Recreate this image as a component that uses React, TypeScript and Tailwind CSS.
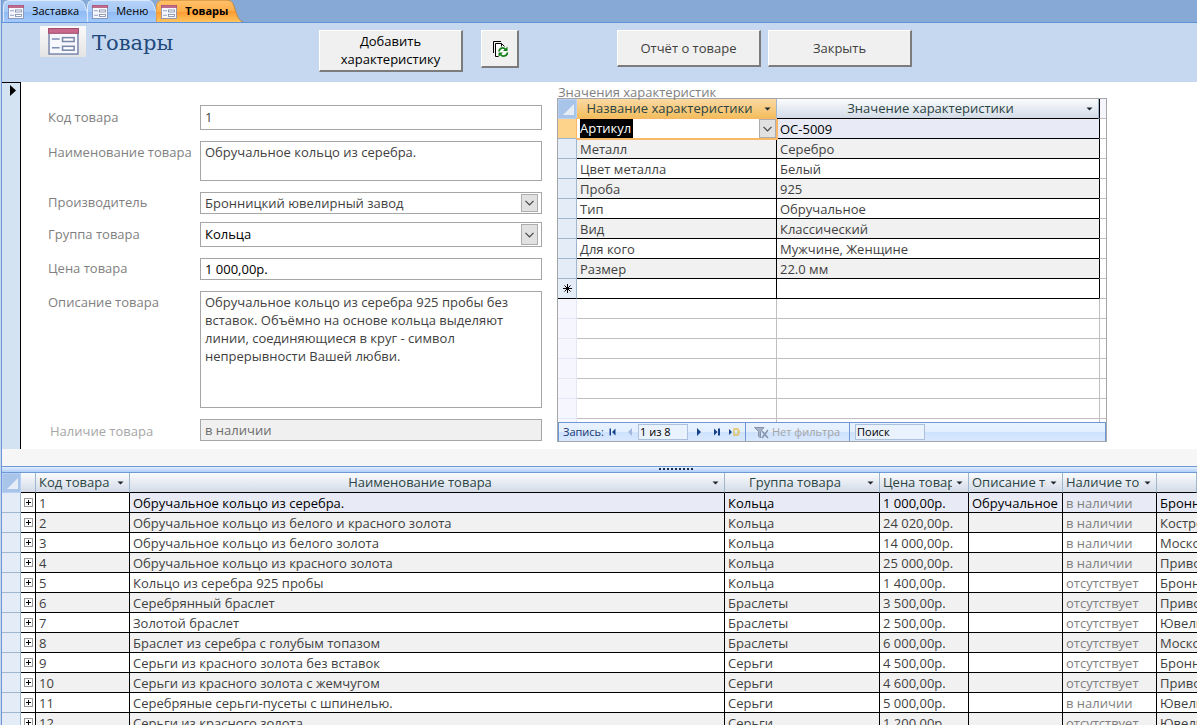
import React, { useState } from 'react';

const UI_FONT = "font-['Open_Sans','Noto_Sans',sans-serif]";

type Product = {
  id: number;
  name: string;
  group: string;
  price: string;
  description?: string;
  stock: string;
  maker: string;
};

const products: Product[] = [
  { id: 1, name: 'Обручальное кольцо из серебра.', group: 'Кольца', price: '1 000,00р.', description: 'Обручальное', stock: 'в наличии', maker: 'Бронницкий' },
  { id: 2, name: 'Обручальное кольцо из белого и красного золота', group: 'Кольца', price: '24 020,00р.', stock: 'в наличии', maker: 'Костромской' },
  { id: 3, name: 'Обручальное кольцо из белого золота', group: 'Кольца', price: '14 000,00р.', stock: 'в наличии', maker: 'Московский' },
  { id: 4, name: 'Обручальное кольцо из красного золота', group: 'Кольца', price: '25 000,00р.', stock: 'в наличии', maker: 'Приволжский' },
  { id: 5, name: 'Кольцо из серебра 925 пробы', group: 'Кольца', price: '1 400,00р.', stock: 'отсутствует', maker: 'Бронницкий' },
  { id: 6, name: 'Серебрянный браслет', group: 'Браслеты', price: '3 500,00р.', stock: 'отсутствует', maker: 'Приволжский' },
  { id: 7, name: 'Золотой браслет', group: 'Браслеты', price: '2 500,00р.', stock: 'отсутствует', maker: 'Ювелирный' },
  { id: 8, name: 'Браслет из серебра с голубым топазом', group: 'Браслеты', price: '6 000,00р.', stock: 'отсутствует', maker: 'Московский' },
  { id: 9, name: 'Серьги из красного золота без вставок', group: 'Серьги', price: '4 500,00р.', stock: 'отсутствует', maker: 'Бронницкий' },
  { id: 10, name: 'Серьги из красного золота с жемчугом', group: 'Серьги', price: '4 600,00р.', stock: 'отсутствует', maker: 'Приволжский' },
  { id: 11, name: 'Серебряные серьги-пусеты с шпинелью.', group: 'Серьги', price: '5 000,00р.', stock: 'в наличии', maker: 'Ювелирный' },
  { id: 12, name: 'Серьги из красного золота', group: 'Серьги', price: '1 200,00р.', stock: 'отсутствует', maker: 'Ювелирный' },
];

const features = [
  ['Артикул', 'ОС-5009'],
  ['Металл', 'Серебро'],
  ['Цвет металла', 'Белый'],
  ['Проба', '925'],
  ['Тип', 'Обручальное'],
  ['Вид', 'Классический'],
  ['Для кого', 'Мужчине, Женщине'],
  ['Размер', '22.0 мм'],
];

function FormIcon({ className }: { className: string }) {
  return (
    <svg viewBox="0 0 32 28" className={className} aria-hidden="true">
      <rect x="1" y="1" width="30" height="26" fill="#f6f8fd" stroke="#7583aa" strokeWidth="1.5" />
      <rect x="0.5" y="0.5" width="31" height="5" fill="#c8688a" stroke="#a04c6e" />
      <path d="M4 11.5h8M4 20.5h8" stroke="#7d8cb8" strokeWidth="1.6" />
      <rect x="15" y="10" width="12" height="4" fill="#fff" stroke="#7a87a8" strokeWidth="1.6" />
      <rect x="15" y="19" width="12" height="4" fill="#fff" stroke="#7a87a8" strokeWidth="1.6" />
    </svg>
  );
}

function Tab({ title, active, first }: { title: string; active?: boolean; first?: boolean }) {
  const id = active ? 'tab-hot' : 'tab-cold';
  return (
    <button type="button" className={`flex h-[22px] ${first ? 'ml-px' : '-ml-[7px]'}`}>
      <span
        className={`flex h-full items-center gap-2 rounded-tl-md border-t border-l pl-1 text-[11px] text-black ${
          active
            ? 'border-[#e3a04a] bg-[linear-gradient(#ffc069_0%,#ffae49_50%,#ff9a30_52%,#ffc45e_100%)] font-bold'
            : 'border-[#dbe9fb] bg-[linear-gradient(#b5d2f8_0%,#a5c9f7_50%,#8fbaf3_52%,#a3c9fa_100%)]'
        }`}
      >
        <FormIcon className="h-[14px] w-4" />
        {title}
      </span>
      <svg viewBox="0 0 15 22" className="h-[22px] w-[15px]" aria-hidden="true">
        <defs>
          <linearGradient id={id} x1="0" y1="0" x2="0" y2="1">
            <stop offset="0" stopColor={active ? '#ffc069' : '#b5d2f8'} />
            <stop offset="0.5" stopColor={active ? '#ffae49' : '#a5c9f7'} />
            <stop offset="0.52" stopColor={active ? '#ff9a30' : '#8fbaf3'} />
            <stop offset="1" stopColor={active ? '#ffc45e' : '#a3c9fa'} />
          </linearGradient>
        </defs>
        <path d="M0 0C4 0 5 3 7 9S11 22 15 22H0Z" fill={`url(#${id})`} />
        <path d="M0 0.5C4 0.5 5 3 7 9S11 21.5 15 21.5" fill="none" stroke={active ? '#b98a4c' : '#dbe9fb'} />
      </svg>
    </button>
  );
}

function BevelButton({ className, children, label }: { className: string; children: React.ReactNode; label?: string }) {
  return (
    <button
      type="button"
      aria-label={label}
      className={`flex shrink-0 items-center justify-center border-t border-l border-r-2 border-b-2 border-t-white border-l-white border-r-[#7c7c7c] border-b-[#7c7c7c] bg-[#f0f0f0] text-[13px] leading-[18px] ${className}`}
    >
      {children}
    </button>
  );
}

function Chevron() {
  return (
    <span className="pointer-events-none flex w-[17px] items-center justify-center border border-[#adadad] bg-[#e1e1e1]">
      <svg viewBox="0 0 9 6" className="h-[6px] w-[9px]" aria-hidden="true">
        <path d="M0.5 0.8L4.5 4.8L8.5 0.8" fill="none" stroke="#444" strokeWidth="1.2" />
      </svg>
    </span>
  );
}

function FormRow({ id, label, top, muted, children }: { id: string; label: string; top?: boolean; muted?: boolean; children: React.ReactNode }) {
  return (
    <div className={`flex ${top ? 'items-start' : 'items-center'}`}>
      <label
        htmlFor={id}
        className={`w-[152px] shrink-0 leading-[18px] whitespace-nowrap ${top ? 'pt-[2px]' : ''} ${muted ? 'pt-[2px] pl-[2px] text-[#a6a6a6]' : 'pb-[2px] text-[#7f7f7f]'}`}
      >
        {label}
      </label>
      {children}
    </div>
  );
}

function Combo({ id, value, className }: { id: string; value: string; className: string }) {
  return (
    <div className={`flex flex-1 border border-[#a6a6a6] bg-white py-px pr-[3px] ${className}`}>
      <select id={id} defaultValue={value} className="min-w-0 flex-1 appearance-none bg-transparent px-1 outline-none">
        <option>{value}</option>
      </select>
      <Chevron />
    </div>
  );
}

// Column header with its small sort/filter arrow
function Head({ title, hot, tight }: { title: string; hot?: boolean; tight?: boolean }) {
  return (
    <th
      scope="col"
      className={`h-5 overflow-hidden border-r border-b border-r-[#9eb6ce] border-b-black p-0 align-top font-normal text-[#2c4444] ${
        hot ? 'bg-linear-to-b from-[#fad9a2] to-[#f3bd5c]' : 'bg-linear-to-b from-[#fafcfd] to-[#d3dbe7]'
      }`}
    >
      <div className="flex items-center pr-[5px]">
        <span className={`min-w-0 flex-1 overflow-hidden leading-[19px] whitespace-nowrap ${tight ? 'pl-[3px] text-left' : 'pl-[2px] text-center'}`}>{title}</span>
        {title && (
          <svg viewBox="0 0 7 4" className="mt-px ml-1 h-1 w-[7px] shrink-0" aria-hidden="true">
            <path d="M0.5 0.5H6.5L3.5 3.5Z" fill="#1c2430" />
          </svg>
        )}
      </div>
    </th>
  );
}

function CornerHead() {
  return (
    <th scope="col" aria-label="Выделить все" className="h-5 border border-[#b8d0f5] bg-[#a9c4e9] p-0">
      <svg viewBox="0 0 17 18" className="block h-[18px] w-[17px]" aria-hidden="true">
        <path d="M15 4V15H4Z" fill="#e6edf6" />
      </svg>
    </th>
  );
}

function NavBar() {
  const [query, setQuery] = useState('Поиск');
  return (
    <div className="flex h-[19px] items-center border border-b-0 border-[#6f97d3] bg-[linear-gradient(#e9f2ff_0%,#e3efff_50%,#cfe2fd_52%,#d8e8ff_100%)] text-[11px] whitespace-nowrap text-[#15366f]">
      <div className="flex h-full w-[187px] shrink-0 items-center border-r border-[#6f97d3] pl-1">
        <span className="w-[46px]">Запись:</span>
        <button type="button" aria-label="Первая запись">
          <svg viewBox="0 0 8 8" className="h-2 w-2"><path d="M0.5 0.5h1.5v7H0.5zM6.5 0.5v7L3 4z" fill="#15428b" /></svg>
        </button>
        <button type="button" aria-label="Предыдущая запись" className="ml-[10px]">
          <svg viewBox="0 0 5 8" className="h-2 w-[5px]"><path d="M5 0v8L1 4z" fill="#a3b9dc" /></svg>
        </button>
        <input aria-label="Номер записи" defaultValue="1 из 8" className="ml-[6px] h-4 w-[50px] border border-[#abc1de] bg-[#eaf2fd] px-px text-black outline-none" />
        <button type="button" aria-label="Следующая запись" className="ml-[9px]">
          <svg viewBox="0 0 5 8" className="h-2 w-[5px]"><path d="M0 0v8l4-4z" fill="#15428b" /></svg>
        </button>
        <button type="button" aria-label="Последняя запись" className="ml-3">
          <svg viewBox="0 0 7 8" className="h-2 w-[7px]"><path d="M4 0.5h2v7H4zM0 0.5v7l3.5-3.5z" fill="#15428b" /></svg>
        </button>
        <button type="button" aria-label="Новая запись" className="ml-2">
          <svg viewBox="0 0 11 8" className="h-2 w-[11px]">
            <path d="M0 1v6l3-3z" fill="#15428b" />
            <path d="M4 1h2M7 0v2M8 1h2M4 3h2M8 3h3M4 5h2M8 5h3M4 7h2M7 6v2M8 7h2" stroke="#e3b01c" strokeWidth="1.2" />
          </svg>
        </button>
      </div>
      <button type="button" disabled className="flex h-full w-[104px] shrink-0 items-center gap-[3px] border-r border-[#6f97d3] pl-2 text-[#a3a3a3]">
        <svg viewBox="0 0 15 13" className="h-[13px] w-[15px]" aria-hidden="true">
          <path d="M0.5 1.5H10L6.5 5.5V12L4.5 10V5.5Z" fill="#a5b1c4" stroke="#8493ab" />
          <path d="M8 5L14 12M14 4L8 12" stroke="#8493ab" strokeWidth="1.5" />
        </svg>
        Нет фильтра
      </button>
      <input
        aria-label="Поиск"
        value={query}
        onChange={(e) => setQuery(e.target.value)}
        className="ml-[5px] h-4 w-[70px] border border-[#abc1de] bg-[#eaf2fd] px-px text-black outline-none"
      />
    </div>
  );
}

function FeatureSheet() {
  return (
    <div className="border border-[#a6a6a6] bg-white">
      <div className="h-[323px] overflow-hidden">
        <table className="w-full table-fixed border-separate border-spacing-0 text-[#3f3f3f]">
          <colgroup>
            <col className="w-[19px]" />
            <col className="w-[200px]" />
            <col />
            <col className="w-[7px]" />
          </colgroup>
          <thead>
            <tr>
              <CornerHead />
              <Head title="Название характеристики" hot />
              <Head title="Значение характеристики" />
              <th aria-hidden="true" className="border-b border-l border-b-[#c0c0c0] border-l-black bg-[#f4f5fd] p-0" />
            </tr>
          </thead>
          <tbody>
            {features.map(([name, value], i) => (
              <tr key={name} className={i % 2 ? 'bg-[#f1f1f1]' : 'bg-white'}>
                <td className={`h-5 border-r border-b border-[#9eb6ce] p-0 ${i === 0 ? 'bg-[#fdd28b]' : 'bg-[#e4ecf7]'}`} />
                <td className="h-5 border-r border-b border-black p-0">
                  {i === 0 ? (
                    <div className="relative flex h-[19px] justify-between bg-white shadow-[0_0_0_1px_#fbb768,1px_1px_0_1px_#fbb768]">
                      <input aria-label="Название характеристики" defaultValue={name} className="ml-[3px] w-[53px] bg-black pt-px text-white outline-none" />
                      <Chevron />
                    </div>
                  ) : (
                    <div className="pt-[2px] pl-[3px] leading-[17px]">{name}</div>
                  )}
                </td>
                <td className={`h-5 border-b border-black p-0 pt-[2px] pl-[3px] leading-[17px] ${i === 0 ? 'bg-[#e8ebf5] text-black' : ''}`}>{value}</td>
                <td className="border-b border-l border-b-[#c0c0c0] border-l-black bg-white p-0" />
              </tr>
            ))}
            <tr>
              <td className="h-5 border-r border-b border-r-[#9eb6ce] border-b-black bg-[#e4ecf7] p-0">
                <svg viewBox="0 0 9 9" className="mx-auto block h-[9px] w-[9px]" aria-hidden="true">
                  <path d="M4.5 0V9M0 4.5H9M1.5 1.5L7.5 7.5M7.5 1.5L1.5 7.5" stroke="#000" />
                </svg>
              </td>
              <td className="border-r border-b border-black p-0" />
              <td className="border-b border-black p-0" />
              <td className="border-b border-l border-b-[#c0c0c0] border-l-black p-0" />
            </tr>
            {[1, 2, 3, 4, 5, 6, 7].map((n) => (
              <tr key={n}>
                <td className="h-5 border-r border-b border-[#e4e8f6] bg-[#f6f7fe] p-0" />
                <td className="border-r border-b border-[#c0c0c0] p-0" />
                <td className="border-b border-[#c0c0c0] p-0" />
                <td className="border-b border-l border-[#c0c0c0] p-0" />
              </tr>
            ))}
          </tbody>
        </table>
      </div>
      <NavBar />
    </div>
  );
}

function ProductSheet() {
  return (
    <table className="w-full table-fixed border-separate border-spacing-0 whitespace-nowrap text-[#3f3f3f]">
      <colgroup>
        <col className="w-[19px]" />
        <col className="w-[15px]" />
        <col className="w-[94px]" />
        <col className="w-[595px]" />
        <col className="w-[155px]" />
        <col className="w-[89px]" />
        <col className="w-[94px]" />
        <col className="w-[94px]" />
        <col />
      </colgroup>
      <thead>
        <tr>
          <CornerHead />
          <Head title="" />
          <Head title="Код товара" tight />
          <Head title="Наименование товара" />
          <Head title="Группа товара" />
          <Head title="Цена товара" tight />
          <Head title="Описание товара" tight />
          <Head title="Наличие товара" tight />
          <Head title="" />
        </tr>
      </thead>
      <tbody>
        {products.map((p, i) => {
          const cell = 'h-5 overflow-hidden border-b border-black p-0 pt-[2px] pl-[3px] leading-[17px]';
          const tint = i === 0 ? 'bg-[#e8ebf5] text-black' : i % 2 ? 'bg-[#f1f1f1]' : 'bg-white';
          return (
            <tr key={p.id}>
              <td className="h-5 border-r border-b border-[#9eb6ce] bg-[#e4ecf7] p-0" />
              <td className="h-5 border-r border-b border-black bg-white p-0">
                <button type="button" aria-label={`Развернуть ${p.id}`} className="mx-auto block h-[9px] w-[9px]">
                  <svg viewBox="0 0 9 9" className="block h-[9px] w-[9px]">
                    <rect x="0.5" y="0.5" width="8" height="8" fill="#fff" stroke="#999" />
                    <path d="M2 4.5H7M4.5 2V7" stroke="#000" />
                  </svg>
                </button>
              </td>
              <td className={`${cell} border-r ${i % 2 ? 'bg-[#f1f1f1]' : 'bg-white'}`}>{p.id}</td>
              <td className={`${cell} border-r ${tint}`}>{p.name}</td>
              <td className={`${cell} border-r ${tint}`}>{p.group}</td>
              <td className={`${cell} border-r ${tint}`}>{p.price}</td>
              <td className={`${cell} border-r ${tint}`}>{p.description}</td>
              <td className={`${cell} border-r ${tint}`}>
                <span className="text-[#7f7f7f]">{p.stock}</span>
              </td>
              <td className={`${cell} ${tint}`}>{p.maker}</td>
            </tr>
          );
        })}
      </tbody>
    </table>
  );
}

export default function App() {
  const field = 'min-w-0 flex-1 border border-[#a6a6a6] bg-white px-1 outline-none';
  return (
    <div className={`flex h-screen flex-col overflow-hidden bg-[#c7d9f1] pl-px text-[13px] ${UI_FONT}`}>
      <nav className="flex h-[23px] shrink-0 border-b border-l border-b-[#5f92d6] border-l-[#6f97d3] bg-[#87a9d6]">
        <Tab title="Заставка" first />
        <Tab title="Меню" />
        <Tab title="Товары" active />
      </nav>

      <div className="flex min-h-0 flex-1 flex-col border-l border-[#6f97d3]">
        <header className="flex h-[59px] shrink-0 items-start bg-[#c6d8ef] pt-[7px] pl-[38px]">
          <div className="-mt-1 flex w-[277px] shrink-0 items-start gap-[6px]">
            <span className="flex h-[31px] w-[46px] items-center justify-center bg-linear-to-b from-[#fafafa] to-[#e4e4e4]">
              <FormIcon className="h-[27px] w-[31px]" />
            </span>
            <h1 className="font-['DejaVu_Serif',serif] text-[21px] leading-[34px] text-[#1f497d]">Товары</h1>
          </div>
          <BevelButton className="ml-[2px] h-[42px] w-[144px] pb-[2px] text-black">
            Добавить
            <br />
            характеристику
          </BevelButton>
          <BevelButton className="ml-[18px] h-[38px] w-[38px]" label="Обновить">
            <svg viewBox="0 0 16 16" className="h-4 w-4" aria-hidden="true">
              <path d="M1.5 12V0.5H9" fill="none" stroke="#000" />
              <path d="M3.5 15.5V2.5H9.5L13.5 6.5V15.5Z" fill="#fff" />
              <path d="M6.5 15.5H3.5V2.5H9.5L12.5 5.5M9.5 2.5V5.5" fill="none" stroke="#000" />
              <path d="M7 10.5C7.5 6.5 11.5 6 13.5 8.5M15.5 11.5C15 15.5 10.5 16 8.5 13.5" fill="none" stroke="#15801a" strokeWidth="1.8" />
              <path d="M15.5 5.5V10H11ZM6.5 16V11.5H11Z" fill="#15801a" />
            </svg>
          </BevelButton>
          <BevelButton className="ml-[98px] h-[37px] w-[144px] text-[#3f3f3f]">Отчёт о товаре</BevelButton>
          <BevelButton className="ml-[7px] h-[37px] w-[144px] text-[#3f3f3f]">Закрыть</BevelButton>
        </header>

        <main className="flex shrink-0 bg-white">
          <div className="w-[19px] shrink-0 border-t border-r border-black bg-[#d4e3f2]">
            <svg viewBox="0 0 6 11" className="mt-[2px] ml-2 h-[11px] w-[6px]" aria-hidden="true">
              <path d="M0 0V11L6 5.5Z" fill="#000" />
            </svg>
          </div>
          <form className="flex w-[521px] shrink-0 flex-col gap-[11px] pt-[23px] pb-2 pl-[27px] text-[#3f3f3f]">
            <FormRow id="code" label="Код товара">
              <input id="code" defaultValue="1" className={`${field} h-[25px] pb-[2px]`} />
            </FormRow>
            <FormRow id="name" label="Наименование товара" top>
              <textarea id="name" defaultValue="Обручальное кольцо из серебра." className={`${field} block h-10 resize-none overflow-hidden pt-px leading-[18px]`} />
            </FormRow>
            <div className="flex flex-col gap-2">
              <FormRow id="maker" label="Производитель">
                <Combo id="maker" value="Бронницкий ювелирный завод" className="h-[22px]" />
              </FormRow>
              <FormRow id="group" label="Группа товара">
                <Combo id="group" value="Кольца" className="h-[25px] text-black" />
              </FormRow>
            </div>
            <FormRow id="price" label="Цена товара">
              <input id="price" defaultValue="1 000,00р." className={`${field} h-[22px] text-black`} />
            </FormRow>
            <FormRow id="about" label="Описание товара" top>
              <textarea
                id="about"
                defaultValue="Обручальное кольцо из серебра 925 пробы без вставок. Объёмно на основе кольца выделяют линии, соединяющиеся в круг - символ непрерывности Вашей любви."
                className={`${field} block h-[117px] resize-none overflow-hidden pt-px pr-5 leading-[18px]`}
              />
            </FormRow>
            <FormRow id="stock" label="Наличие товара" muted>
              <input id="stock" readOnly defaultValue="в наличии" className="h-[22px] min-w-0 flex-1 border border-[#a6a6a6] bg-[#f0f0f0] px-1 text-[#6d6d6d] outline-none" />
            </FormRow>
          </form>
          <section className="mr-[90px] ml-[15px] min-w-0 flex-1 pt-[2px]">
            <h2 className="h-[14px] pl-px leading-[17px] text-[#7f7f7f]">Значения характеристик</h2>
            <FeatureSheet />
          </section>
        </main>

        <div className="h-[17px] shrink-0 bg-[#f6f6f6]" />
        <div className="flex h-[7px] shrink-0 justify-center border-y border-[#6f97d3] bg-linear-to-b from-[#e3efff] to-[#b0cff7] pl-[153px]">
          <svg viewBox="0 0 35 3" className="mt-px h-[3px] w-[35px]" aria-hidden="true">
            <path d="M0 1H35" stroke="#1c2c4a" strokeWidth="2" strokeDasharray="2 2" />
          </svg>
        </div>
        <div className="min-h-0 flex-1 overflow-hidden bg-white">
          <ProductSheet />
        </div>
      </div>
    </div>
  );
}
